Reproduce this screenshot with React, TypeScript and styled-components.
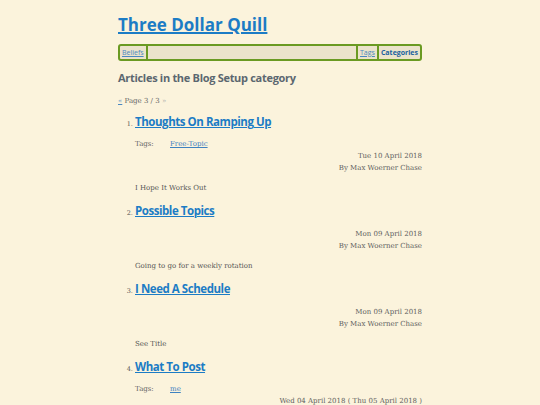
import React from "react"
import styled, { createGlobalStyle } from "styled-components"

const GlobalStyle = createGlobalStyle`
  html, body {
    margin: 0;
    padding: 0;
    background: #fbf3dc;
  }
  body {
    font-family: "DejaVu Serif", serif;
    color: #555;
  }
`

const Page = styled.div`
  width: 304px;
  margin: 0 auto;
  padding-top: 14px;
`

const SiteTitle = styled.a`
  display: block;
  font-family: "Open Sans", sans-serif;
  font-weight: 700;
  font-size: 17px;
  line-height: 22px;
  color: #1c7cc5;
  text-decoration: underline;
  text-decoration-thickness: 1.5px;
`

const Nav = styled.nav`
  display: flex;
  align-items: stretch;
  margin-top: 8px;
  height: 13px;
  border: 2px solid #6a9a22;
  border-radius: 3px;
  background: #ebe3cb;
  font-family: "Open Sans", sans-serif;
  font-size: 7px;
`

const NavItem = styled.a<{ $bold?: boolean; $sep?: "left" | "right" }>`
  display: flex;
  align-items: center;
  padding: 0 2px;
  color: ${p => (p.$bold ? "#1a5f9e" : "#4a88c0")};
  font-weight: ${p => (p.$bold ? 700 : 400)};
  text-decoration: ${p => (p.$bold ? "none" : "underline")};
  ${p => p.$sep === "left" && "border-left: 2px solid #6a9a22;"}
  ${p => p.$sep === "right" && "border-right: 2px solid #6a9a22;"}
`

const Spacer = styled.div`
  flex: 1;
`

const Heading = styled.h1`
  margin: 8px 0 0;
  font-family: "Open Sans", sans-serif;
  font-weight: 700;
  font-size: 11px;
  letter-spacing: -0.3px;
  line-height: 18px;
  color: #5b6770;
`

const Pager = styled.div`
  margin-top: 9px;
  font-family: "DejaVu Serif", serif;
  font-size: 7px;
  color: #666;
  line-height: 10px;
`

const PagerLink = styled.a`
  color: #4a88c0;
  text-decoration: underline;
`

const PagerMuted = styled.span`
  color: #aaa;
`

const List = styled.ol`
  margin: 7px 0 0;
  padding-left: 17px;
  font-size: 6.5px;
  color: #555;
`

const Item = styled.li`
  margin-bottom: 9px;
  &::marker {
    font-family: "DejaVu Serif", serif;
  }
`

const ItemTitle = styled.a`
  font-family: "Open Sans", sans-serif;
  font-weight: 700;
  font-size: 11.5px;
  letter-spacing: -0.45px;
  line-height: 18px;
  color: #1c7cc5;
  text-decoration: underline;
  text-decoration-thickness: 1.2px;
`

const Tags = styled.div`
  display: flex;
  margin-top: 8px;
  font-size: 7px;
  line-height: 10px;
`

const TagsLabel = styled.span`
  width: 35px;
  color: #666;
`

const TagLink = styled.a`
  color: #3f82c0;
  text-decoration: underline;
`

const Meta = styled.div<{ $tags?: boolean }>`
  margin-top: ${p => (p.$tags ? "1px" : "8px")};
  text-align: right;
  font-size: 7px;
  line-height: 12px;
  color: #5e5e5e;
`

const Summary = styled.p`
  margin: 9px 0 0;
  font-size: 7px;
  line-height: 10px;
  color: #555;
`

interface Post {
  title: string
  tags?: string[]
  date: string
  summary?: string
}

const posts: Post[] = [
  { title: "Thoughts On Ramping Up", tags: ["Free-Topic"], date: "Tue 10 April 2018", summary: "I Hope It Works Out" },
  { title: "Possible Topics", date: "Mon 09 April 2018", summary: "Going to go for a weekly rotation" },
  { title: "I Need A Schedule", date: "Mon 09 April 2018", summary: "See Title" },
  { title: "What To Post", tags: ["me"], date: "Wed 04 April 2018 ( Thu 05 April 2018 )" },
]

const App: React.FC = () => {
  return (
    <>
      <GlobalStyle />
      <Page>
        <SiteTitle href="#">Three Dollar Quill</SiteTitle>
        <Nav>
          <NavItem href="#" $sep="right">Beliefs</NavItem>
          <Spacer />
          <NavItem href="#" $sep="left">Tags</NavItem>
          <NavItem href="#" $sep="left" $bold>Categories</NavItem>
        </Nav>
        <Heading>Articles in the Blog Setup category</Heading>
        <Pager>
          <PagerLink href="#">«</PagerLink> Page 3 / 3 <PagerMuted>»</PagerMuted>
        </Pager>
        <List>
          {posts.map(post => (
            <Item key={post.title}>
              <ItemTitle href="#">{post.title}</ItemTitle>
              {post.tags && (
                <Tags>
                  <TagsLabel>Tags:</TagsLabel>
                  {post.tags.map(t => (
                    <TagLink key={t} href="#">{t}</TagLink>
                  ))}
                </Tags>
              )}
              <Meta $tags={!!post.tags}>
                {post.date}
                {post.summary && <><br />By Max Woerner Chase</>}
              </Meta>
              {post.summary && <Summary>{post.summary}</Summary>}
            </Item>
          ))}
        </List>
      </Page>
    </>
  )
}

export default App
